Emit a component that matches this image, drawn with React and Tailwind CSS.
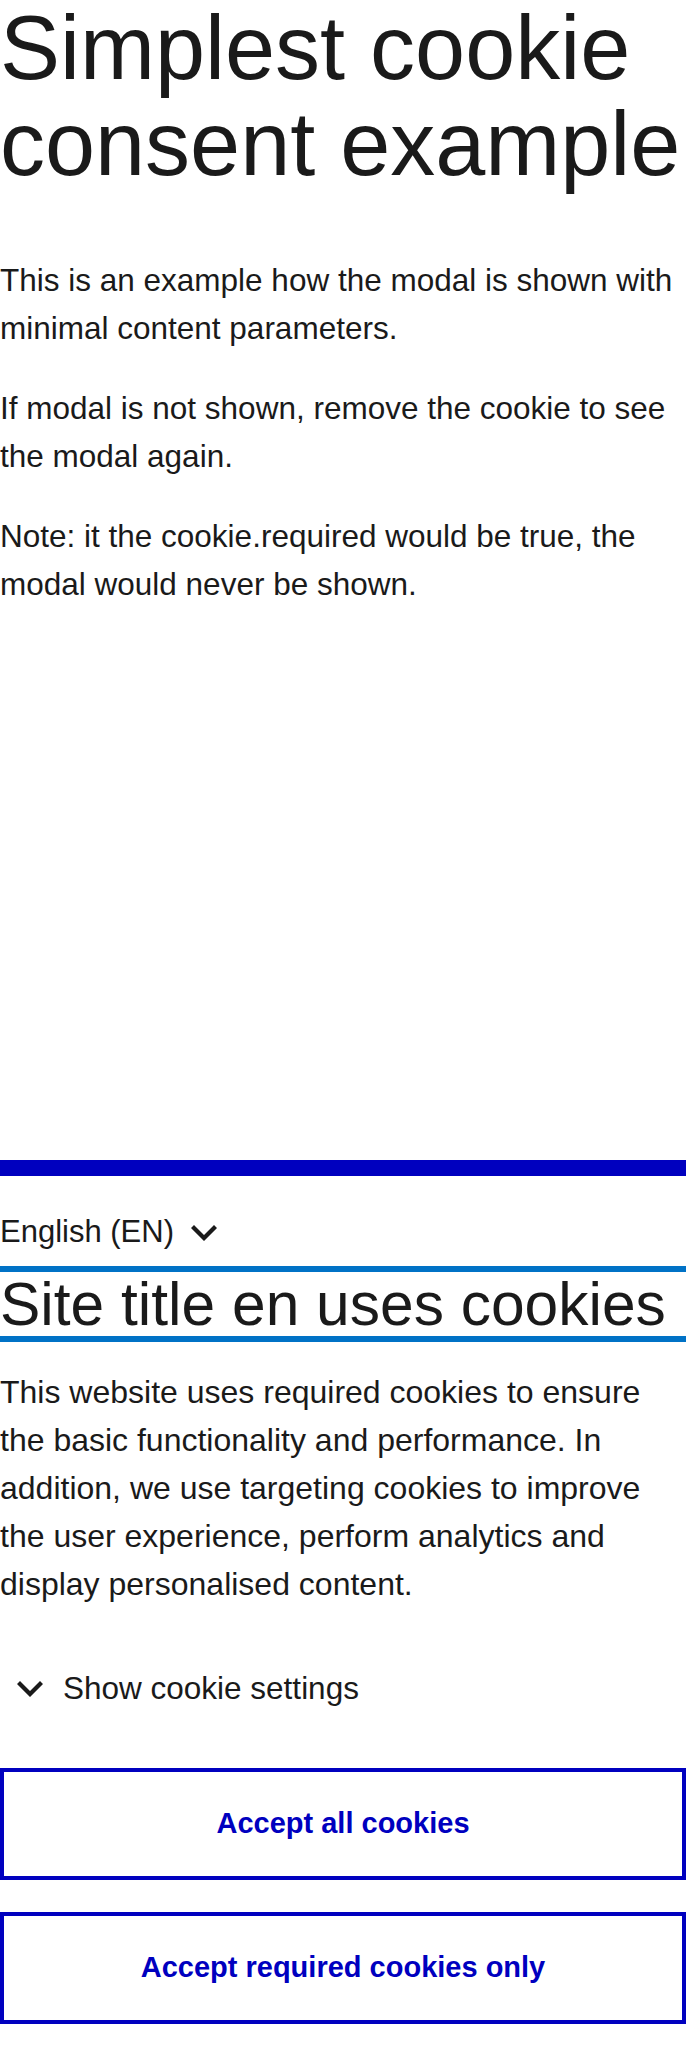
import { useState } from "react";

// HDS-style angle-down, drawn at 24 units and scaled by the wrapper.
const AngleDown = ({ className }) => (
  <svg viewBox="0 0 24 24" className={className} aria-hidden="true">
    <path
      fill="currentColor"
      d="M12 13.5L17 8.5L18.5 10L12 16.5L5.5 10L7 8.5L12 13.5Z"
    />
  </svg>
);

const CookieBanner = () => {
  const [open, setOpen] = useState(false);

  return (
    <section className="mt-auto w-full bg-white text-[#1a1a1a]">
      <div className="h-[16px] w-full bg-[#0000bf]" />

      <div className="pt-[32px]">
        <button type="button" className="flex h-[48px] items-center gap-[6px] text-[31px] leading-[48px]">
          <span>English (EN)</span>
          <AngleDown className="h-[48px] w-[48px]" />
        </button>

        <h2 className="mt-[10px] border-y-[6px] border-[#0072c6] text-[60.5px] leading-[64px] font-normal">
          Site title en uses cookies
        </h2>

        <p className="mt-[26px] text-[32px] leading-[48px]">
          This website uses required cookies to ensure the basic functionality
          and performance. In addition, we use targeting cookies to improve the
          user experience, perform analytics and display personalised content.
        </p>

        <button
          type="button"
          onClick={() => setOpen(!open)}
          className="mt-[56px] flex h-[48px] items-center gap-[9px] pl-[6px] text-[31.5px] leading-[48px]"
        >
          <AngleDown className="h-[48px] w-[48px]" />
          <span>Show cookie settings</span>
        </button>

        <div className="mt-[56px] flex flex-col gap-[32px] pb-[32px]">
          <button
            type="button"
            className="h-[112px] w-full border-[4px] border-[#0000bf] text-[29px] font-bold text-[#0000bf]"
          >
            Accept all cookies
          </button>
          <button
            type="button"
            className="h-[112px] w-full border-[4px] border-[#0000bf] text-[29px] font-bold text-[#0000bf]"
          >
            Accept required cookies only
          </button>
        </div>
      </div>
    </section>
  );
}

export default function App() {
  return (
    <div className="flex min-h-screen flex-col bg-white font-['Liberation_Sans',Arial,sans-serif] text-[#1a1a1a]">
      <main>
        <h1 className="text-[90px] leading-[96px] font-normal">
          Simplest cookie consent example
        </h1>
        <div className="mt-[64px] flex flex-col gap-[32px] text-[31.5px] leading-[48px]">
          <p>
            This is an example how the modal is shown with minimal content
            parameters.
          </p>
          <p>If modal is not shown, remove the cookie to see the modal again.</p>
          <p>
            Note: it the cookie.required would be true, the modal would never be
            shown.
          </p>
        </div>
      </main>
      <CookieBanner />
    </div>
  );
}
